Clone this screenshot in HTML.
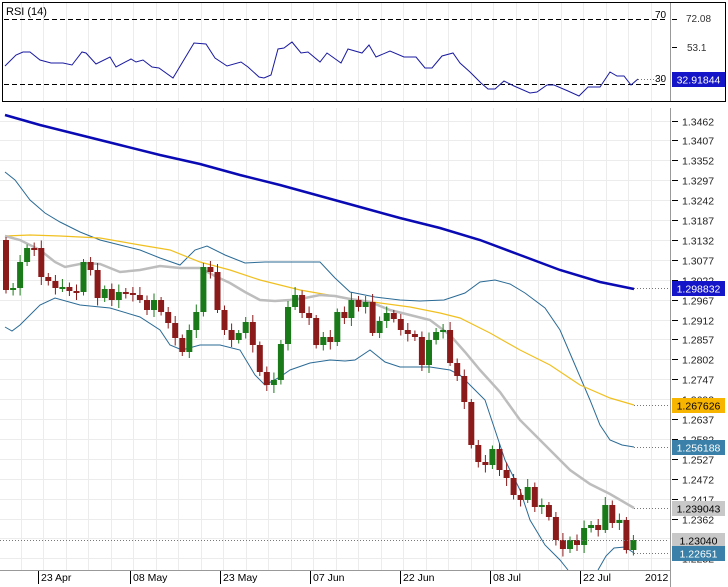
<!DOCTYPE html>
<html><head><meta charset="utf-8"><style>
html,body{margin:0;padding:0;background:#fff;width:728px;height:587px;overflow:hidden}
svg{display:block;font-family:"Liberation Sans",Arial,sans-serif}
</style></head><body>
<svg id="s" width="728" height="587" viewBox="0 0 728 587" xmlns="http://www.w3.org/2000/svg">
<rect width="728" height="587" fill="#fff"/>
<g id="grid" stroke="#ececec" stroke-width="1"></g>
<!-- RSI panel -->
<rect x="2.5" y="2.5" width="723" height="99" fill="none" stroke="#000" stroke-width="1"/>
<line x1="670.5" y1="3" x2="670.5" y2="101" stroke="#999"/>
<text x="6" y="15" font-size="11" fill="#000">RSI (14)</text>
<line x1="4" y1="19.5" x2="668" y2="19.5" stroke="#000" stroke-dasharray="5,3"/>
<line x1="4" y1="84.5" x2="668" y2="84.5" stroke="#000" stroke-dasharray="5,3"/>
<text x="655" y="18" font-size="10">70</text>
<text x="655" y="82" font-size="10">30</text>
<line x1="672" y1="19.5" x2="677" y2="19.5" stroke="#000"/>
<line x1="672" y1="47.5" x2="677" y2="47.5" stroke="#000"/>
<text x="686" y="22" font-size="10" fill="#333">72.08</text>
<text x="687" y="51" font-size="10" fill="#333">53.1</text>
<polyline fill="none" stroke="#1a1aa0" stroke-width="1" points="5,66 16,55 23,52 30,52 40,60 51,63 63,63 72,65 82,52 86,53 96,64 110,57 116,67 131,59 136,62 143,60 152,67 159,68 173,78 185,58 194,43 206,44 215,58 227,66 241,62 248,67 259,77 264,78 271,75 278,49 284,48 292,42 301,53 308,52 320,62 327,53 341,63 348,49 362,53 369,45 376,57 390,51 404,57 416,57 425,68 432,68 442,56 453,53 460,63 470,72 481,83 488,89 495,89 504,81 514,86 530,93 537,92 547,85 554,85 568,91 579,96 588,87 600,87 610,72 617,76 624,76 631,85 638,79"/>
<line x1="638" y1="79.5" x2="663" y2="79.5" stroke="#777" stroke-dasharray="1,2"/>
<rect x="672" y="72" width="53" height="15" fill="#1414c8"/>
<text x="698.5" y="83.5" font-size="10.5" fill="#fff" text-anchor="middle">32.91844</text>
<!-- main -->
<line x1="670.5" y1="108" x2="670.5" y2="587" stroke="#999"/>
<line x1="0" y1="570.5" x2="670" y2="570.5" stroke="#999"/>
<g id="ticks"></g>
<g id="dates" font-size="10.5" fill="#000"></g>
<polyline fill="none" stroke="#2a6a95" stroke-width="1" points="5,172 15,180 30,200 45,213 60,222 80,232 100,240 120,245 140,250 160,258 180,265 195,250 207,246 225,255 245,263 265,262 280,262 300,262 320,262 335,278 350,292 375,297 400,300 420,301 444,300 465,293 480,282 495,280 510,284 525,293 545,308 560,330 575,365 590,400 600,425 610,440 622,445 634,447"/>
<polyline fill="none" stroke="#2a6a95" stroke-width="1" points="5,327 12,331 20,325 40,305 55,298 80,305 110,308 140,317 160,330 170,345 182,350 200,345 220,345 240,350 255,375 265,385 280,377 290,370 310,363 330,360 345,361 355,360 370,350 385,362 400,367 430,367 450,370 460,375 475,390 485,400 495,430 505,460 520,490 530,520 545,545 560,560 568,570"/>
<polyline fill="none" stroke="#2a6a95" stroke-width="1" points="598,570 606,556 614,548 625,547 634,553"/>
<polyline fill="none" stroke="#f0c020" stroke-width="1.2" points="5,236 30,235 60,236 100,238 140,245 170,250 200,262 230,270 260,280 300,290 340,297 380,303 410,307 440,313 460,318 490,333 520,350 550,365 580,385 610,398 634,405"/>
<polyline fill="none" stroke="#bdbdbd" stroke-width="2.5" points="5,236 20,240 40,250 55,262 65,267 85,263 100,264 120,272 140,270 160,266 180,268 200,268 215,276 230,283 245,292 260,300 275,301 290,300 305,298 320,295 335,296 350,299 370,302 390,310 410,315 430,320 450,335 465,352 480,370 500,392 520,420 545,445 570,470 590,484 610,494 634,508"/>
<polyline fill="none" stroke="#0a0ab4" stroke-width="2.5" points="5,115 40,125 80,135 120,145 160,155 200,164 240,175 280,185 320,196 360,207 400,218 440,228 480,240 520,255 560,270 600,282 634,289"/>
<g id="candles"></g>
<g stroke="#777" stroke-dasharray="1,2">
<line x1="634" y1="288.5" x2="668" y2="288.5"/>
<line x1="634" y1="405.5" x2="668" y2="405.5"/>
<line x1="634" y1="447.5" x2="668" y2="447.5"/>
<line x1="634" y1="508.5" x2="668" y2="508.5"/>
<line x1="0" y1="540.5" x2="668" y2="540.5"/>
<line x1="634" y1="553.5" x2="668" y2="553.5"/>
</g>
<g font-size="10.5" text-anchor="middle">
<rect x="672" y="281" width="53" height="15" fill="#1414c8"/><text x="698.5" y="292.5" fill="#fff">1.298832</text>
<rect x="672" y="398" width="53" height="15" fill="#f7b500"/><text x="698.5" y="409.5" fill="#000">1.267626</text>
<rect x="672" y="440" width="53" height="15" fill="#3a80a8"/><text x="698.5" y="451.5" fill="#fff">1.256188</text>
<rect x="672" y="501" width="53" height="15" fill="#c8c8c8"/><text x="698.5" y="512.5" fill="#000">1.239043</text>
<rect x="672" y="533" width="53" height="15" fill="#c8c8c8"/><text x="698.5" y="544.5" fill="#000">1.23040</text>
<rect x="672" y="546" width="53" height="15" fill="#3a80a8"/><text x="698.5" y="557.5" fill="#fff">1.22651</text>
</g>
</svg>
<script>
(function(){
var NS="http://www.w3.org/2000/svg";
function el(p,t,a,txt){var e=document.createElementNS(NS,t);for(var k in a)e.setAttribute(k,a[k]);if(txt)e.textContent=txt;p.appendChild(e);return e;}
var g=document.getElementById('grid');
for(var x=20.5;x<670;x+=22.5){el(g,'line',{x1:Math.round(x)+.5,y1:3,x2:Math.round(x)+.5,y2:101});el(g,'line',{x1:Math.round(x)+.5,y1:108,x2:Math.round(x)+.5,y2:570});}
var labs=["1.3462","1.3407","1.3352","1.3297","1.3242","1.3187","1.3132","1.3077","1.3022","1.2967","1.2912","1.2857","1.2802","1.2747","1.2692","1.2637","1.2582","1.2527","1.2472","1.2417","1.2362","1.2307","1.2252"];
var tk=document.getElementById('ticks');
for(var i=0;i<labs.length;i++){var y=Math.round(120.5+i*19.9)+.5;el(g,'line',{x1:0,y1:y,x2:670,y2:y});el(tk,'line',{x1:672,y1:y,x2:678,y2:y,stroke:'#000'});el(tk,'text',{x:682,y:y+4,'font-size':10.5,fill:'#222'},labs[i]);}
var d=document.getElementById('dates');
[["23 Apr",38],["08 May",130],["23 May",220],["07 Jun",310],["22 Jun",400],["08 Jul",490],["22 Jul",580]].forEach(function(a){el(d,'line',{x1:a[1]+.5,y1:571,x2:a[1]+.5,y2:584,stroke:'#000'});el(d,'text',{x:a[1]+3,y:581},a[0]);});
el(d,'text',{x:645,y:581},"2012");
var c=[290,288,262,248,248,277,281,288,287,291,292,262,270,298,289,300,292,293,295,300,310,300,312,323,338,352,330,312,267,272,310,330,340,333,322,345,372,385,380,344,307,295,313,318,345,337,342,312,318,300,307,302,333,321,313,319,330,334,337,365,340,332,330,363,376,402,445,462,465,449,470,478,495,500,487,507,505,517,540,549,540,545,528,525,530,505,523,520,550,540];
var cg=document.getElementById('candles');
var o=240;
function r(i){return ((i*37)%11)/2;}
for(var i=0;i<c.length;i++){var cx=6+i*7.05,cl=c[i],tp=Math.min(o,cl),bt=Math.max(o,cl);if(bt-tp<2){bt=tp+2;}
var up=cl<o,col=up?'#1a7a1a':'#8b1a1a';
el(cg,'line',{x1:cx.toFixed(1),y1:tp-3-r(i),x2:cx.toFixed(1),y2:bt+3+r(i+3),stroke:col,'stroke-width':1});
el(cg,'rect',{x:(cx-3).toFixed(1),y:tp,width:6,height:bt-tp,fill:col});
o=cl;}
})();
</script>
</body></html>
